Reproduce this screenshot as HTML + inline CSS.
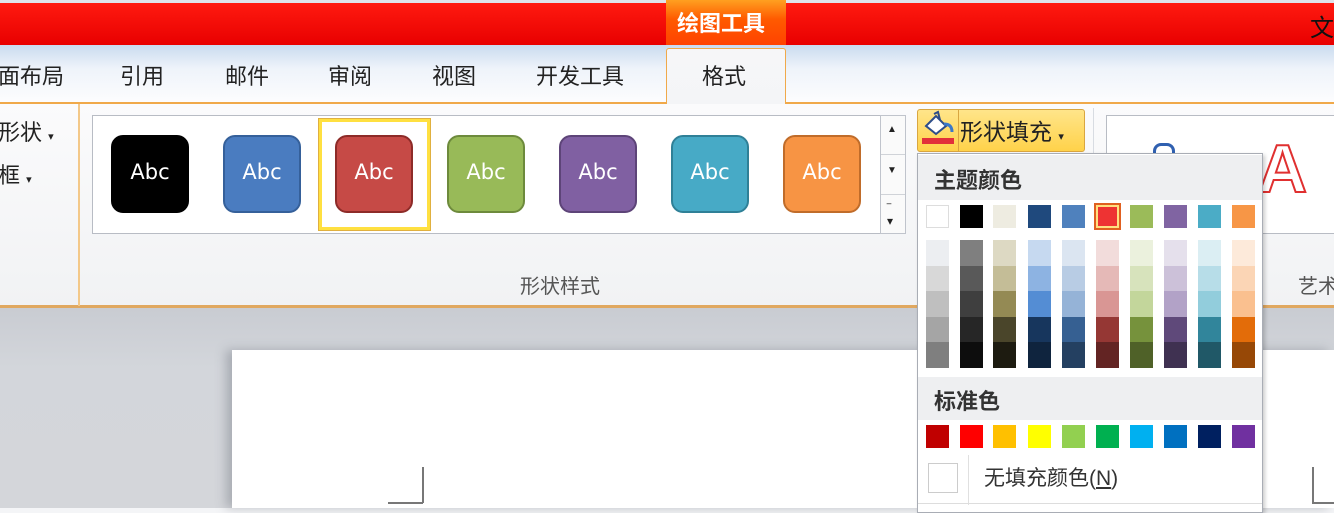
<!DOCTYPE html>
<html><head><meta charset="utf-8"><style>
*{margin:0;padding:0;box-sizing:border-box}
body{width:1334px;height:508px;overflow:hidden;position:relative;background:#f4f5f7;font-family:"Liberation Sans","Noto Sans CJK SC",sans-serif}
.a{position:absolute}
.t{position:absolute;font-size:22px;color:#222;white-space:nowrap}
.g{position:absolute;width:78px;height:78px;top:135px;border-radius:12px;color:#fff;font-size:21px;text-align:center;line-height:70px;font-family:"DejaVu Sans",sans-serif;border:2px solid}
.sw{position:absolute;width:23px;height:23px}
</style></head><body>
<div class="a" style="left:0;top:0;width:1334px;height:4px;background:#dfe3ea"></div>
<div class="a" style="left:0;top:3px;width:1334px;height:42px;background:linear-gradient(#ff1a10,#e80000)"></div>
<div class="a" style="left:666px;top:0;width:120px;height:48px;background:linear-gradient(#ffa020,#ff5a00 40%,#ff4000)"></div>
<div class="t" style="left:677px;top:6px;color:#fff;font-weight:bold;font-size:22px">绘图工具</div>
<div class="t" style="left:1310px;top:8px;font-size:24px;color:#111">文</div>
<div class="a" style="left:0;top:45px;width:1334px;height:58px;background:linear-gradient(#c9dbef,#eef3fa 40%,#fdfdfe)"></div>
<div class="a" style="left:0;top:102px;width:1334px;height:2px;background:#f0a94a"></div>
<div class="a" style="left:666px;top:48px;width:120px;height:56px;background:linear-gradient(#f6f6f8,#f4f5f7);border:1.5px solid #f0a94a;border-bottom:none;border-radius:3px 3px 0 0"></div>
<div class="t" style="left:-2px;top:59px">面布局</div>
<div class="t" style="left:120px;top:59px">引用</div>
<div class="t" style="left:225px;top:59px">邮件</div>
<div class="t" style="left:328px;top:59px">审阅</div>
<div class="t" style="left:432px;top:59px">视图</div>
<div class="t" style="left:536px;top:59px">开发工具</div>
<div class="t" style="left:702px;top:59px">格式</div>
<div class="a" style="left:0;top:104px;width:1334px;height:202px;background:linear-gradient(#fbfbfc,#f1f2f4)"></div>
<div class="a" style="left:0;top:305px;width:1334px;height:3px;background:#e0a860"></div>
<div class="a" style="left:78px;top:104px;width:2px;height:202px;background:#f3c889"></div>
<div class="t" style="left:-2px;top:115px">形状 <span style="font-size:11px">▾</span></div>
<div class="t" style="left:-2px;top:158px">框 <span style="font-size:11px">▾</span></div>
<div class="a" style="left:92px;top:115px;width:789px;height:119px;background:#fff;border:1px solid #b8bcc4"></div>
<div class="a" style="left:880px;top:115px;width:26px;height:119px;background:#fafafa;border:1px solid #c0c4cc"></div>
<div class="t" style="left:887px;top:124px;font-size:10px">▲</div>
<div class="t" style="left:887px;top:165px;font-size:10px">▼</div>
<div class="a" style="left:881px;top:154px;width:24px;height:1px;background:#d0d3d8"></div>
<div class="a" style="left:881px;top:194px;width:24px;height:1px;background:#d0d3d8"></div>
<div class="t" style="left:887px;top:203px;font-size:12px;line-height:12px">‾<br>▾</div>
<div class="a" style="left:319px;top:119px;width:111px;height:111px;border:3px solid #ffe040;outline:1px solid #e0b040;background:#fff"></div>
<div class="g" style="left:111px;background:#000;border-color:#000">Abc</div>
<div class="g" style="left:223px;background:#4a7cc0;border-color:#35609a">Abc</div>
<div class="g" style="left:335px;background:#c64a46;border-color:#8d2b28">Abc</div>
<div class="g" style="left:447px;background:#98ba58;border-color:#6d8a3c">Abc</div>
<div class="g" style="left:559px;background:#8060a2;border-color:#5d4478">Abc</div>
<div class="g" style="left:671px;background:#47aac6;border-color:#2f8097">Abc</div>
<div class="g" style="left:783px;background:#f79444;border-color:#c06c2a">Abc</div>
<div class="t" style="left:520px;top:270px;font-size:20px;color:#555">形状样式</div>
<div class="a" style="left:1093px;top:108px;width:1px;height:195px;background:#d8dce2"></div>
<div class="a" style="left:1106px;top:115px;width:230px;height:119px;background:#fff;border:1px solid #b8bcc4"></div>
<div class="t" style="left:1258px;top:130px;font-size:68px;color:#fff;-webkit-text-stroke:2px #e03030;font-weight:bold">A</div>
<div class="a" style="left:1153px;top:143px;width:22px;height:14px;border:3px solid #3060b0;border-bottom:none;border-radius:8px 8px 0 0"></div>
<div class="t" style="left:1298px;top:270px;font-size:20px;color:#555">艺术</div>
<div class="a" style="left:917px;top:109px;width:168px;height:43px;background:linear-gradient(#ffe58a,#ffd24a);border:1px solid #d9a640;border-radius:3px"></div>
<div class="a" style="left:958px;top:110px;width:1px;height:41px;background:#d9a640"></div>
<div class="a" style="left:922px;top:138px;width:32px;height:6px;background:#e2303a"></div>
<svg class="a" style="left:922px;top:110px" width="34" height="28"><path d="M4 16 L14 6 L24 16 L14 24 Z" fill="#fff" stroke="#2d4d8a" stroke-width="2"/><path d="M12 4 L16 2 L18 10" fill="none" stroke="#2d4d8a" stroke-width="2"/><path d="M22 14 Q30 14 30 22" fill="none" stroke="#3b78c8" stroke-width="3"/></svg>
<div class="t" style="left:960px;top:113px;font-size:23px">形状填充 <span style="font-size:11px">▾</span></div>
<div class="a" style="left:0;top:308px;width:1334px;height:200px;background:linear-gradient(#c9ccd2,#d3d6db 30%,#d4d6da)"></div>
<div class="a" style="left:232px;top:350px;width:1102px;height:158px;background:#fff;box-shadow:-6px 0 10px rgba(90,95,105,.35)"></div>
<div class="a" style="left:422px;top:467px;width:1.5px;height:36px;background:#777"></div>
<div class="a" style="left:388px;top:502px;width:35px;height:1.5px;background:#777"></div>
<div class="a" style="left:1312px;top:467px;width:1.5px;height:36px;background:#777"></div>
<div class="a" style="left:1312px;top:502px;width:22px;height:1.5px;background:#777"></div>
<div class="a" style="left:917px;top:153px;width:346px;height:360px;background:#fff;border:1px solid #a9adb5;box-shadow:2px 2px 4px rgba(0,0,0,.2)"></div>
<div class="a" style="left:918px;top:155px;width:344px;height:45px;background:#eeeff1"></div>
<div class="t" style="left:934px;top:163px;font-weight:bold;color:#333">主题颜色</div>
<div class="a" style="left:918px;top:377px;width:344px;height:43px;background:#eeeff1"></div>
<div class="t" style="left:934px;top:384px;font-weight:bold;color:#333">标准色</div>
<div id="sw"></div>
<div class="a" style="left:928px;top:463px;width:30px;height:30px;border:1px solid #ccc;background:#fff"></div>
<div class="a" style="left:968px;top:455px;width:1px;height:50px;background:#e0e0e0"></div>
<div class="t" style="left:984px;top:462px;font-size:21px;color:#333">无填充颜色(<u>N</u>)</div>
<div class="a" style="left:918px;top:503px;width:344px;height:1px;background:#ddd"></div>
<script>
var xs=[926,960,993,1028,1062,1096,1130,1164,1198,1232];
var tp=["#fff","#000","#eeece1","#1f497d","#4f81bd","#ee3333","#9bbb59","#8064a2","#4bacc6","#f79646"];
var gr=[["#eceef1","#d8d8d8","#bfbfbf","#a5a5a5","#7f7f7f"],["#7f7f7f","#595959","#3f3f3f","#262626","#0d0d0d"],["#ddd9c3","#c4bd97","#948a54","#4a452a","#1d1b10"],["#c6d9f0","#8db3e2","#548dd4","#17365d","#0f243e"],["#dbe5f1","#b8cce4","#95b3d7","#366092","#244061"],["#f2dcdb","#e5b9b7","#d99694","#953734","#632423"],["#ebf1dd","#d7e3bc","#c3d69b","#76923c","#4f6128"],["#e5e0ec","#ccc1d9","#b2a2c7","#5f497a","#3f3151"],["#dbeef3","#b7dde8","#92cddc","#31859b","#205867"],["#fdeada","#fbd5b5","#fac08f","#e36c09","#974806"]];
var st=["#c00000","#ff0000","#ffc000","#ffff00","#92d050","#00b050","#00b0f0","#0070c0","#002060","#7030a0"];
var h="";
for(var i=0;i<10;i++){var x=xs[i];
h+='<div class="sw" style="left:'+x+'px;top:205px;background:'+tp[i]+';'+(i==0?'border:1px solid #ddd;':'')+(i==5?'outline:2px solid #e06020;border:2px solid #ffe080;':'')+'"></div>';
for(var j=0;j<5;j++)h+='<div class="sw" style="left:'+x+'px;top:'+(240+j*25.6)+'px;height:26px;background:'+gr[i][j]+'"></div>';
h+='<div class="sw" style="left:'+x+'px;top:425px;background:'+st[i]+'"></div>';}
document.getElementById("sw").innerHTML=h;
</script>
</body></html>
